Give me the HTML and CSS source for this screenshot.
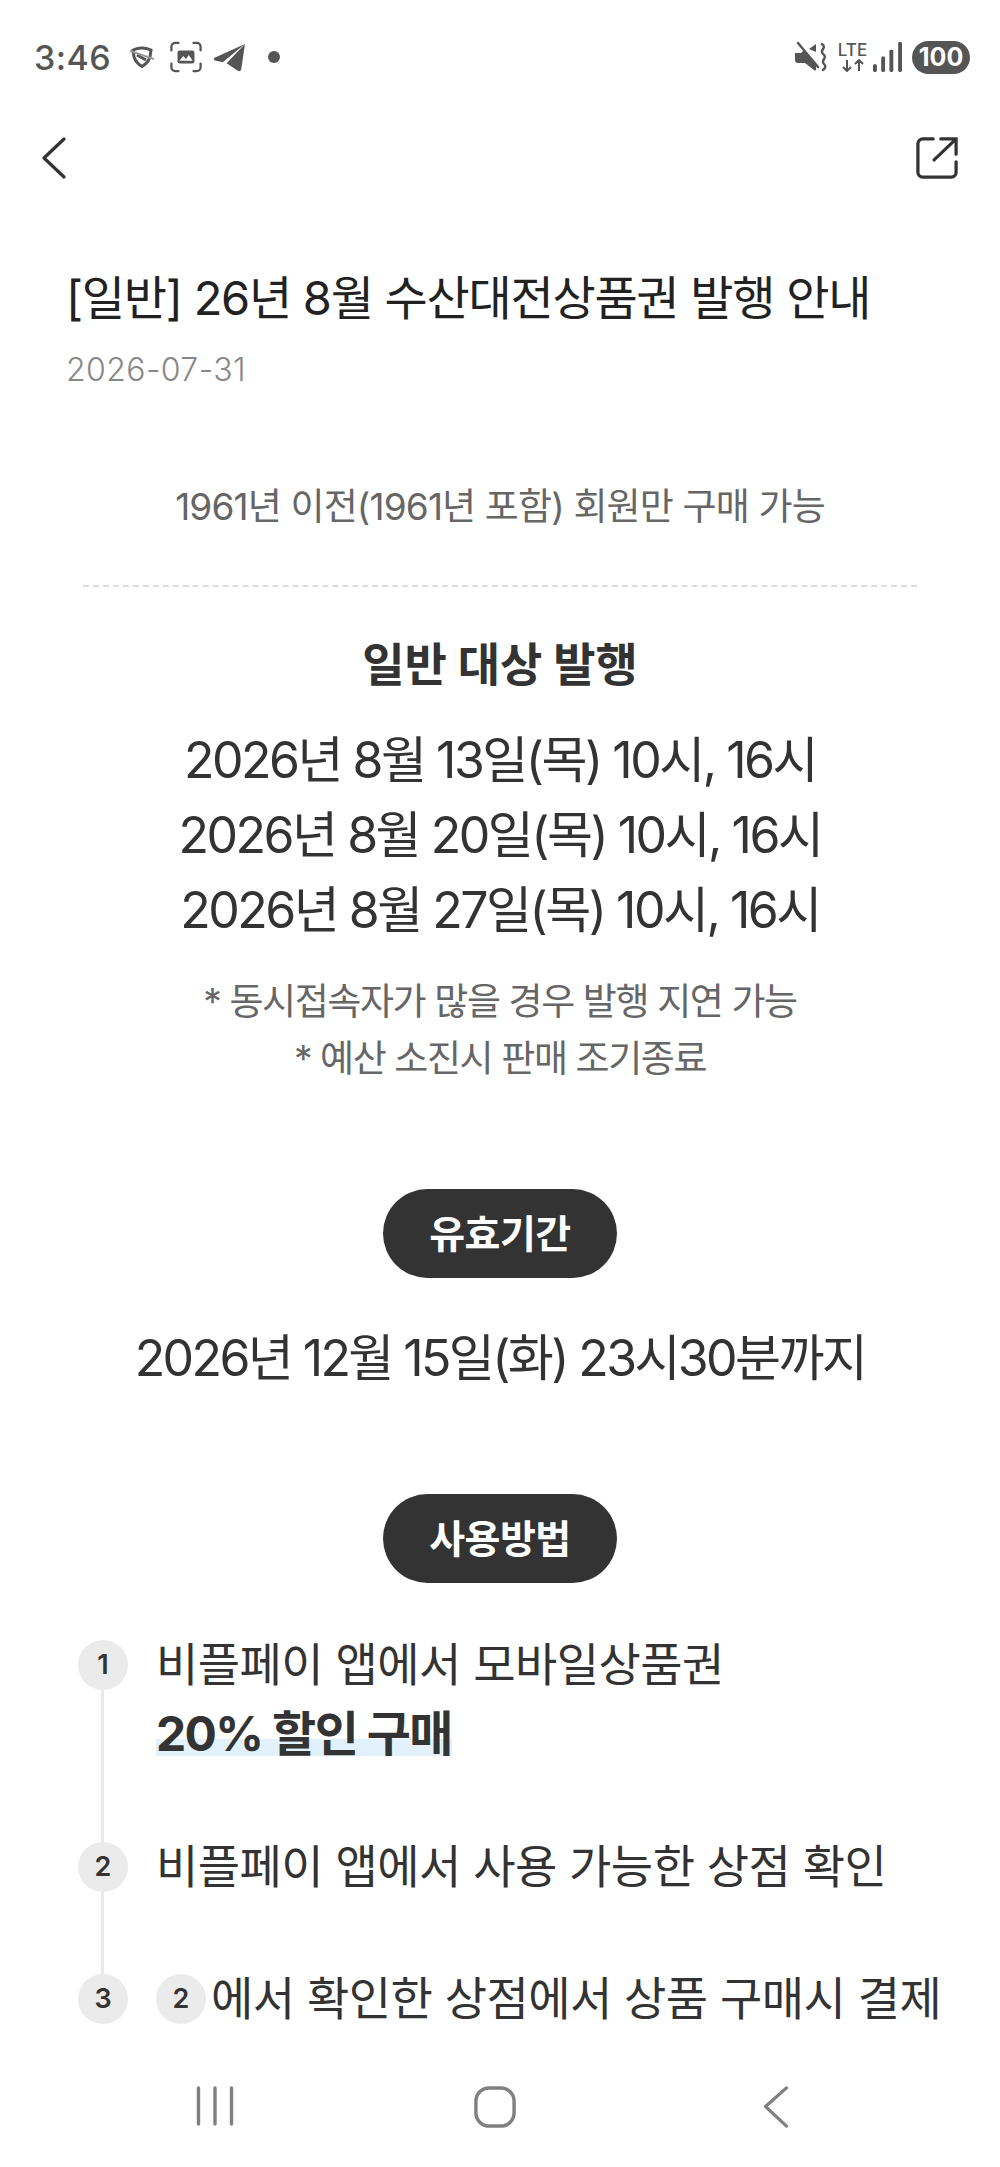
FILE: index.html
```html
<!DOCTYPE html>
<html lang="ko">
<head>
    <meta charset="UTF-8" />
    <meta name="viewport" content="width=device-width, initial-scale=1" />
    <title>26년 8월 수산대전상품권 발행 안내</title>
    <link rel="stylesheet" href="styles.css">
</head>
<body>
    <div class="status-bar">
        <div class="status-left">
            <span class="clock">3:46</span>
            <svg class="ic-shield" viewBox="0 0 24 22" width="24" height="22"><path d="M3 4 Q12 0 21 4 L20 11 Q18 17 12 20.500 Q6 17 4 11 Z" fill="none" stroke="#555" stroke-width="3"/><path d="M7 9 L16 14" stroke="#555" stroke-width="3"/><path d="M0 5 L24 13" stroke="#999" stroke-width="2"/></svg>
            <svg class="ic-shot" viewBox="0 0 34 32" width="32" height="32"><path d="M1.500 9V5a4 4 0 0 1 4-4H9M25 1h3.500a4 4 0 0 1 4 4v4M32.500 23v4a4 4 0 0 1-4 4H25M9 31H5.500a4 4 0 0 1-4-4v-4" fill="none" stroke="#555" stroke-width="2.400" stroke-linecap="round"/><rect x="8" y="9" width="18" height="14" rx="2.500" fill="#555"/><path d="M10 20l4-5 3 3 3-4 4 6z" fill="#fff"/></svg>
            <svg class="ic-plane" viewBox="0 0 34 30" width="33" height="29"><path d="M33 1 L1 15.500 Q0 17 2 18 L10 20 Z" fill="#555"/><path d="M33 1 L14 21 L26 29 Q28 29.500 29 28 Z" fill="#555"/></svg>
            <span class="dot"></span>
        </div>
        <div class="status-right">
            <svg class="ic-mute" viewBox="0 0 32 30" width="32" height="30"><path d="M0 11h6l3-3 12 13v7q-1 1-2 0l-9-7H3q-3 0-3-3z" fill="#555"/><path d="M14 7l7-5v8z" fill="#555"/><path d="M3 1 L23 25" stroke="#555" stroke-width="2.400" stroke-linecap="round"/><path d="M27 2q3 2 1 5t0 5q3 2 1 5t0 5q3 3-1 6" fill="none" stroke="#555" stroke-width="2.400" stroke-linecap="round"/></svg>
            <div class="lte">
                <span class="lte-text">LTE</span>
                <svg viewBox="0 0 24 13" width="24" height="13"><path d="M6 1v11M2 8l4 4 4-4M18 12V1M14 5l4-4 4 4" fill="none" stroke="#555" stroke-width="2"/></svg>
            </div>
            <svg class="ic-signal" viewBox="0 0 30 31" width="29" height="30"><rect x="0" y="23" width="4" height="8" rx="1.500" fill="#555"/><rect x="8.500" y="15" width="4" height="16" rx="1.500" fill="#555"/><rect x="17" y="8" width="4" height="23" rx="1.500" fill="#555"/><rect x="26" y="0" width="4" height="31" rx="1.500" fill="#555"/></svg>
            <span class="battery">100</span>
        </div>
    </div>

    <div class="top-bar">
        <svg viewBox="0 0 26 42" width="26" height="42"><path d="M23 2 L3 21 L23 40" fill="none" stroke="#333" stroke-width="3.200" stroke-linecap="round" stroke-linejoin="round"/></svg>
        <svg viewBox="0 0 44 44" width="42" height="42"><path d="M18 2H7a5 5 0 0 0-5 5v30a5 5 0 0 0 5 5h30a5 5 0 0 0 5-5V26" fill="none" stroke="#333" stroke-width="3.400" stroke-linecap="round"/><path d="M19 24 L42 2 M26 2H42V18" fill="none" stroke="#333" stroke-width="3.400" stroke-linecap="round"/></svg>
    </div>

    <main class="content">
        <h1 class="title">[일반] 26년 8월 수산대전상품권 발행 안내</h1>
        <p class="date">2026-07-31</p>

        <p class="notice">1961년 이전(1961년 포함) 회원만 구매 가능</p>
        <hr class="divider">

        <h2 class="sub-title">일반 대상 발행</h2>
        <div class="big-lines">
            <p>2026년 8월 13일(목) 10시, 16시</p>
            <p>2026년 8월 20일(목) 10시, 16시</p>
            <p>2026년 8월 27일(목) 10시, 16시</p>
        </div>
        <div class="notes">
            <p>* 동시접속자가 많을 경우 발행 지연 가능</p>
            <p>* 예산 소진시 판매 조기종료</p>
        </div>

        <div class="pill pill-first">유효기간</div>
        <p class="expire">2026년 12월 15일(화) 23시30분까지</p>

        <div class="pill pill-second">사용방법</div>
        <ol class="steps">
            <li class="step step-one">
                <span class="num">1</span>
                <div class="step-text">
                    <p>비플페이 앱에서 모바일상품권</p>
                    <p><strong class="mark">20% 할인 구매</strong></p>
                </div>
            </li>
            <li class="step step-two">
                <span class="num">2</span>
                <div class="step-text">
                    <p>비플페이 앱에서 사용 가능한 상점 확인</p>
                </div>
            </li>
            <li class="step step-three">
                <span class="num">3</span>
                <div class="step-text">
                    <p><span class="num num-inline">2</span>에서 확인한 상점에서 상품 구매시 결제</p>
                </div>
            </li>
        </ol>
    </main>

    <nav class="nav-bar">
        <svg viewBox="0 0 38 40" width="38" height="40"><path d="M2.500 2v36M19 2v36M35.500 2v36" stroke="#808080" stroke-width="3.400" stroke-linecap="round"/></svg>
        <svg viewBox="0 0 44 44" width="42" height="42"><rect x="2" y="2" width="40" height="40" rx="14" fill="none" stroke="#808080" stroke-width="3.600"/></svg>
        <svg viewBox="0 0 28 44" width="28" height="42"><path d="M25 2 L3 21.500 L25 42" fill="none" stroke="#808080" stroke-width="3.400" stroke-linecap="round" stroke-linejoin="round"/></svg>
    </nav>
</body>
</html>
```

FILE: styles.css
```css
* { box-sizing: border-box; }
html, body { margin: 0; padding: 0; }
body {
    width: 1000px;
    height: 2167px;
    overflow: hidden;
    display: flex;
    flex-direction: column;
    background: #fff;
    color: #333;
    font-family: "Inter", "Noto Sans CJK KR", sans-serif;
}
p, h1, h2, ol { margin: 0; padding: 0; }

/* status bar */
.status-bar { flex: none; height: 115px; padding: 40px 30px 0 34px; display: flex; justify-content: space-between; align-items: flex-start; }
.status-left, .status-right { display: flex; align-items: center; height: 34px; }
.clock { font-size: 34px; font-weight: 500; color: #555; letter-spacing: 0.4px; margin-right: 19px; }
.ic-shot { margin: 0 11px 0 16px; }
.dot { width: 12px; height: 12px; border-radius: 50%; background: #555; margin-left: 22px; }
.lte { display: flex; flex-direction: column; align-items: center; width: 29px; margin: 0 6px 0 11px; }
.lte-text { font-size: 17px; line-height: 17px; font-weight: 500; color: #555; }
.battery { width: 58px; height: 33px; border-radius: 17px; background: #555; color: #fff; font-size: 25px; font-weight: 700; line-height: 33px; text-align: center; margin-left: 10px; }

/* top bar */
.top-bar { flex: none; height: 86px; padding: 0 42px 0 41px; display: flex; justify-content: space-between; align-items: center; }

/* content */
.content { flex: 1; overflow: hidden; padding-top: 67px; }
.title { font-size: 47px; line-height: 60px; font-weight: 400; letter-spacing: -1.27px; padding-left: 66px; color: #222; white-space: nowrap; }
.date { font-size: 32px; line-height: 44px; font-weight: 300; letter-spacing: 0.4px; color: #888; padding: 20px 0 0 66px; }
.notice { font-size: 37px; line-height: 54px; letter-spacing: -0.85px; color: #666; text-align: center; margin-top: 88px; }
.divider { border: 0; border-top: 2px dashed #ddd; margin: 51px 83px 0; }
.sub-title { font-size: 46px; line-height: 60px; font-weight: 700; text-align: center; margin-top: 47px; }
.big-lines { margin-top: 29px; font-size: 50px; line-height: 75px; letter-spacing: -2.5px; text-align: center; }
.notes { margin-top: 25px; font-size: 37px; line-height: 57px; letter-spacing: -1.4px; color: #666; text-align: center; }
.pill { width: 234px; height: 89px; margin: 0 auto; border-radius: 45px; background: #333; color: #fff; font-size: 39px; font-weight: 700; letter-spacing: -0.5px; line-height: 89px; text-align: center; }
.pill-first { margin-top: 102px; }
.expire { font-size: 50px; line-height: 75px; letter-spacing: -2.6px; text-align: center; margin-top: 43px; }
.pill-second { margin-top: 98px; }

/* steps */
.steps { list-style: none; padding: 0 0 0 78px; margin-top: 47px; }
.step { display: flex; gap: 28px; position: relative; font-size: 46px; line-height: 69px; letter-spacing: -0.55px; }
.step-one { height: 202px; }
.step-two { height: 132px; }
.step-one::before, .step-two::before { content: ""; position: absolute; left: 23px; top: 40px; bottom: -10px; width: 3px; background: #e9e9e9; }
.num { position: relative; flex: none; width: 50px; height: 50px; margin-top: 10px; border-radius: 50%; background: #ebebeb; color: #333; font-size: 27px; font-weight: 600; letter-spacing: 0; line-height: 50px; text-align: center; }
.num-inline { display: inline-block; margin: 0 5px 0 0; vertical-align: 7px; }
.step-text { white-space: nowrap; }
.mark { font-size: 48px; font-weight: 700; letter-spacing: -1.65px; background: linear-gradient(transparent 60%, #e2f1fb 60%, #e2f1fb 88%, transparent 88%); }

/* nav */
.nav-bar { flex: none; height: 117px; display: flex; align-items: flex-start; padding-top: 36px; }
.nav-bar svg:nth-child(1) { margin-left: 196px; }
.nav-bar svg:nth-child(2) { margin-left: 240px; }
.nav-bar svg:nth-child(3) { margin-left: 246px; }
```
